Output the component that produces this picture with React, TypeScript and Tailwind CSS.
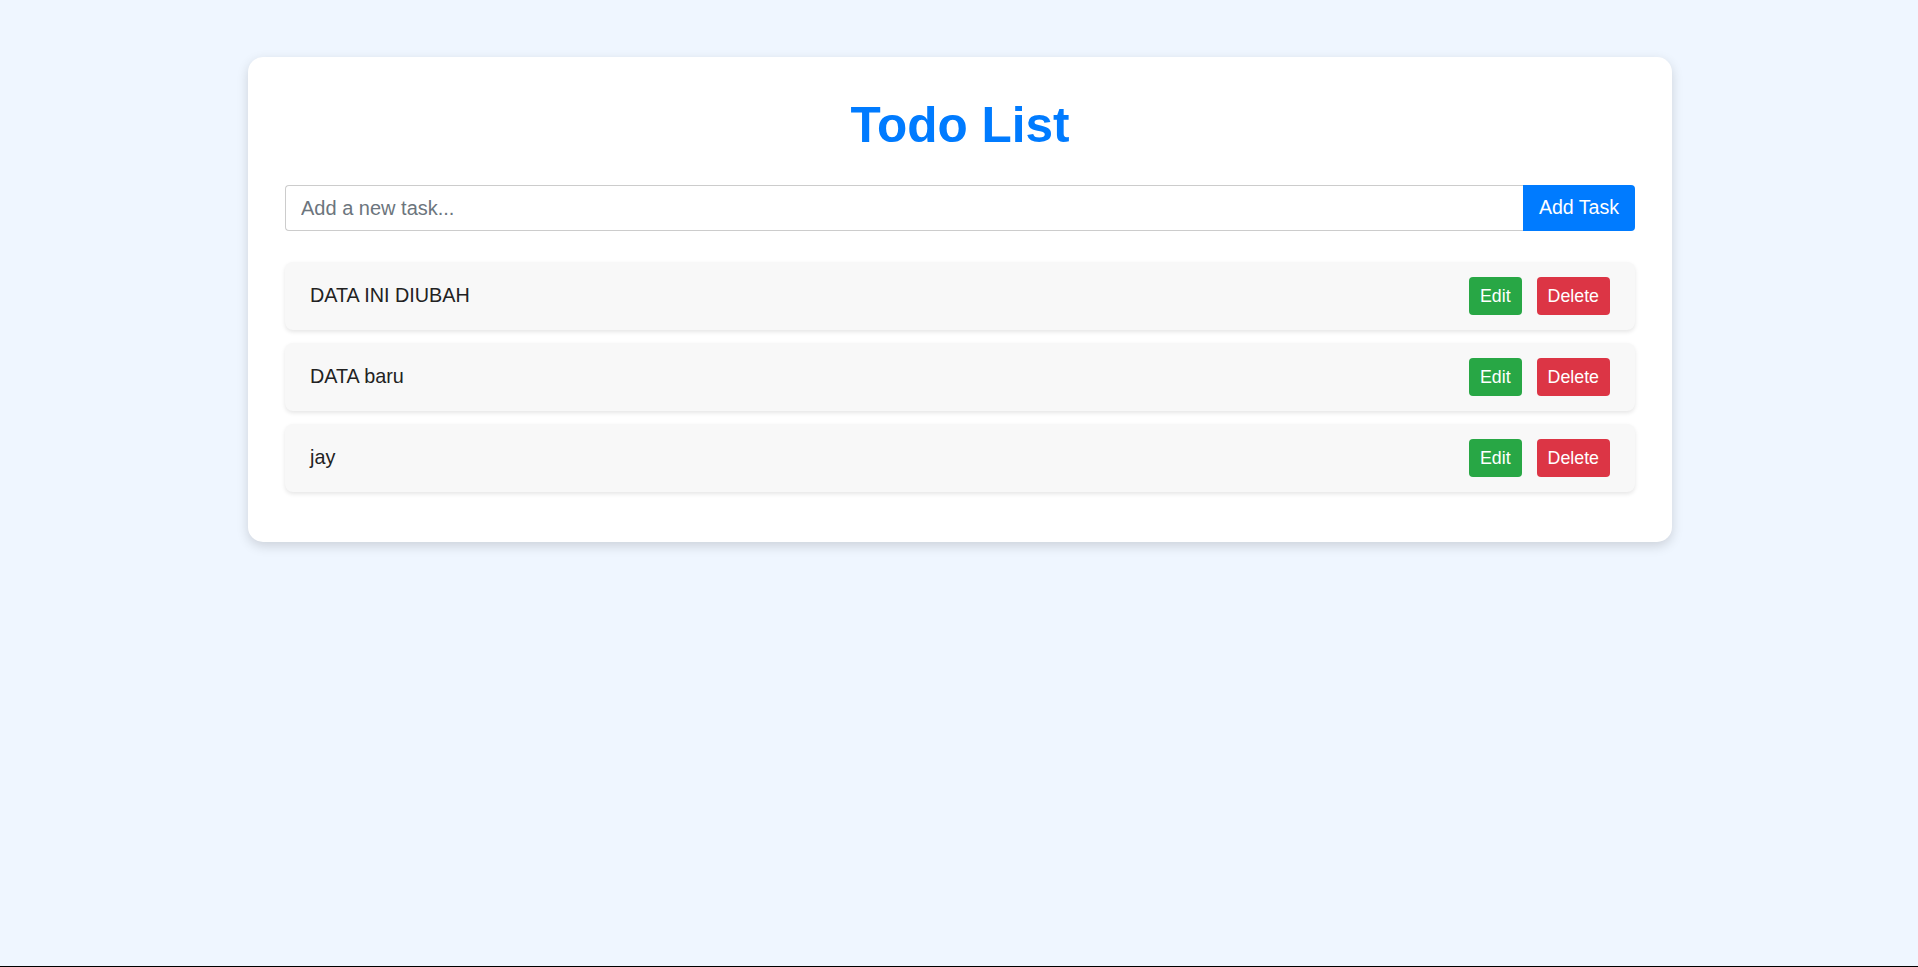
import React from "react";

const tasks = ["DATA INI DIUBAH", "DATA baru", "jay"];

export default function App() {
  return (
    <div
      className="h-[967px] w-full bg-blue-50 border-b border-black box-border pt-[57px]"
      style={{ fontFamily: '"Liberation Sans", Arial, sans-serif' }}
    >
      <div className="mx-auto w-[1424px] translate-x-[1px] bg-white rounded-[15px] shadow-[0_4px_12px_rgba(0,0,0,0.15)] px-[37px] pt-[43px] pb-[37px]">
        <h1 className="text-center text-[49.5px] leading-none font-bold text-[#007bff] mb-[35.5px]">
          Todo List
        </h1>
        <div className="flex h-[46px] mb-[31px]">
          <input
            type="text"
            placeholder="Add a new task..."
            className="flex-1 h-full border border-[#cccccc] border-r-0 rounded-l-[4px] px-[15px] text-[20px] text-[#333] placeholder:text-[#6c757d] outline-none"
          />
          <button className="w-[112px] h-full bg-[#007bff] text-white text-[19.6px] rounded-r-[4px]">
            Add Task
          </button>
        </div>
        <div className="flex flex-col">
          {tasks.map((t) => (
            <div
              key={t}
              className="flex items-center justify-between h-[68px] mb-[13px] bg-[#f8f8f8] rounded-[8px] shadow-[0_2px_4px_rgba(0,0,0,0.1)] pl-[25px] pr-[25px]"
            >
              <span className="text-[19.8px] text-[#222]">{t}</span>
              <div className="flex gap-[15px]">
                <button className="h-[38px] px-[11px] bg-[#28a745] text-white text-[17.8px] rounded-[4px]">
                  Edit
                </button>
                <button className="h-[38px] px-[11px] bg-[#dc3545] text-white text-[17.8px] rounded-[4px]">
                  Delete
                </button>
              </div>
            </div>
          ))}
        </div>
      </div>
    </div>
  );
}
